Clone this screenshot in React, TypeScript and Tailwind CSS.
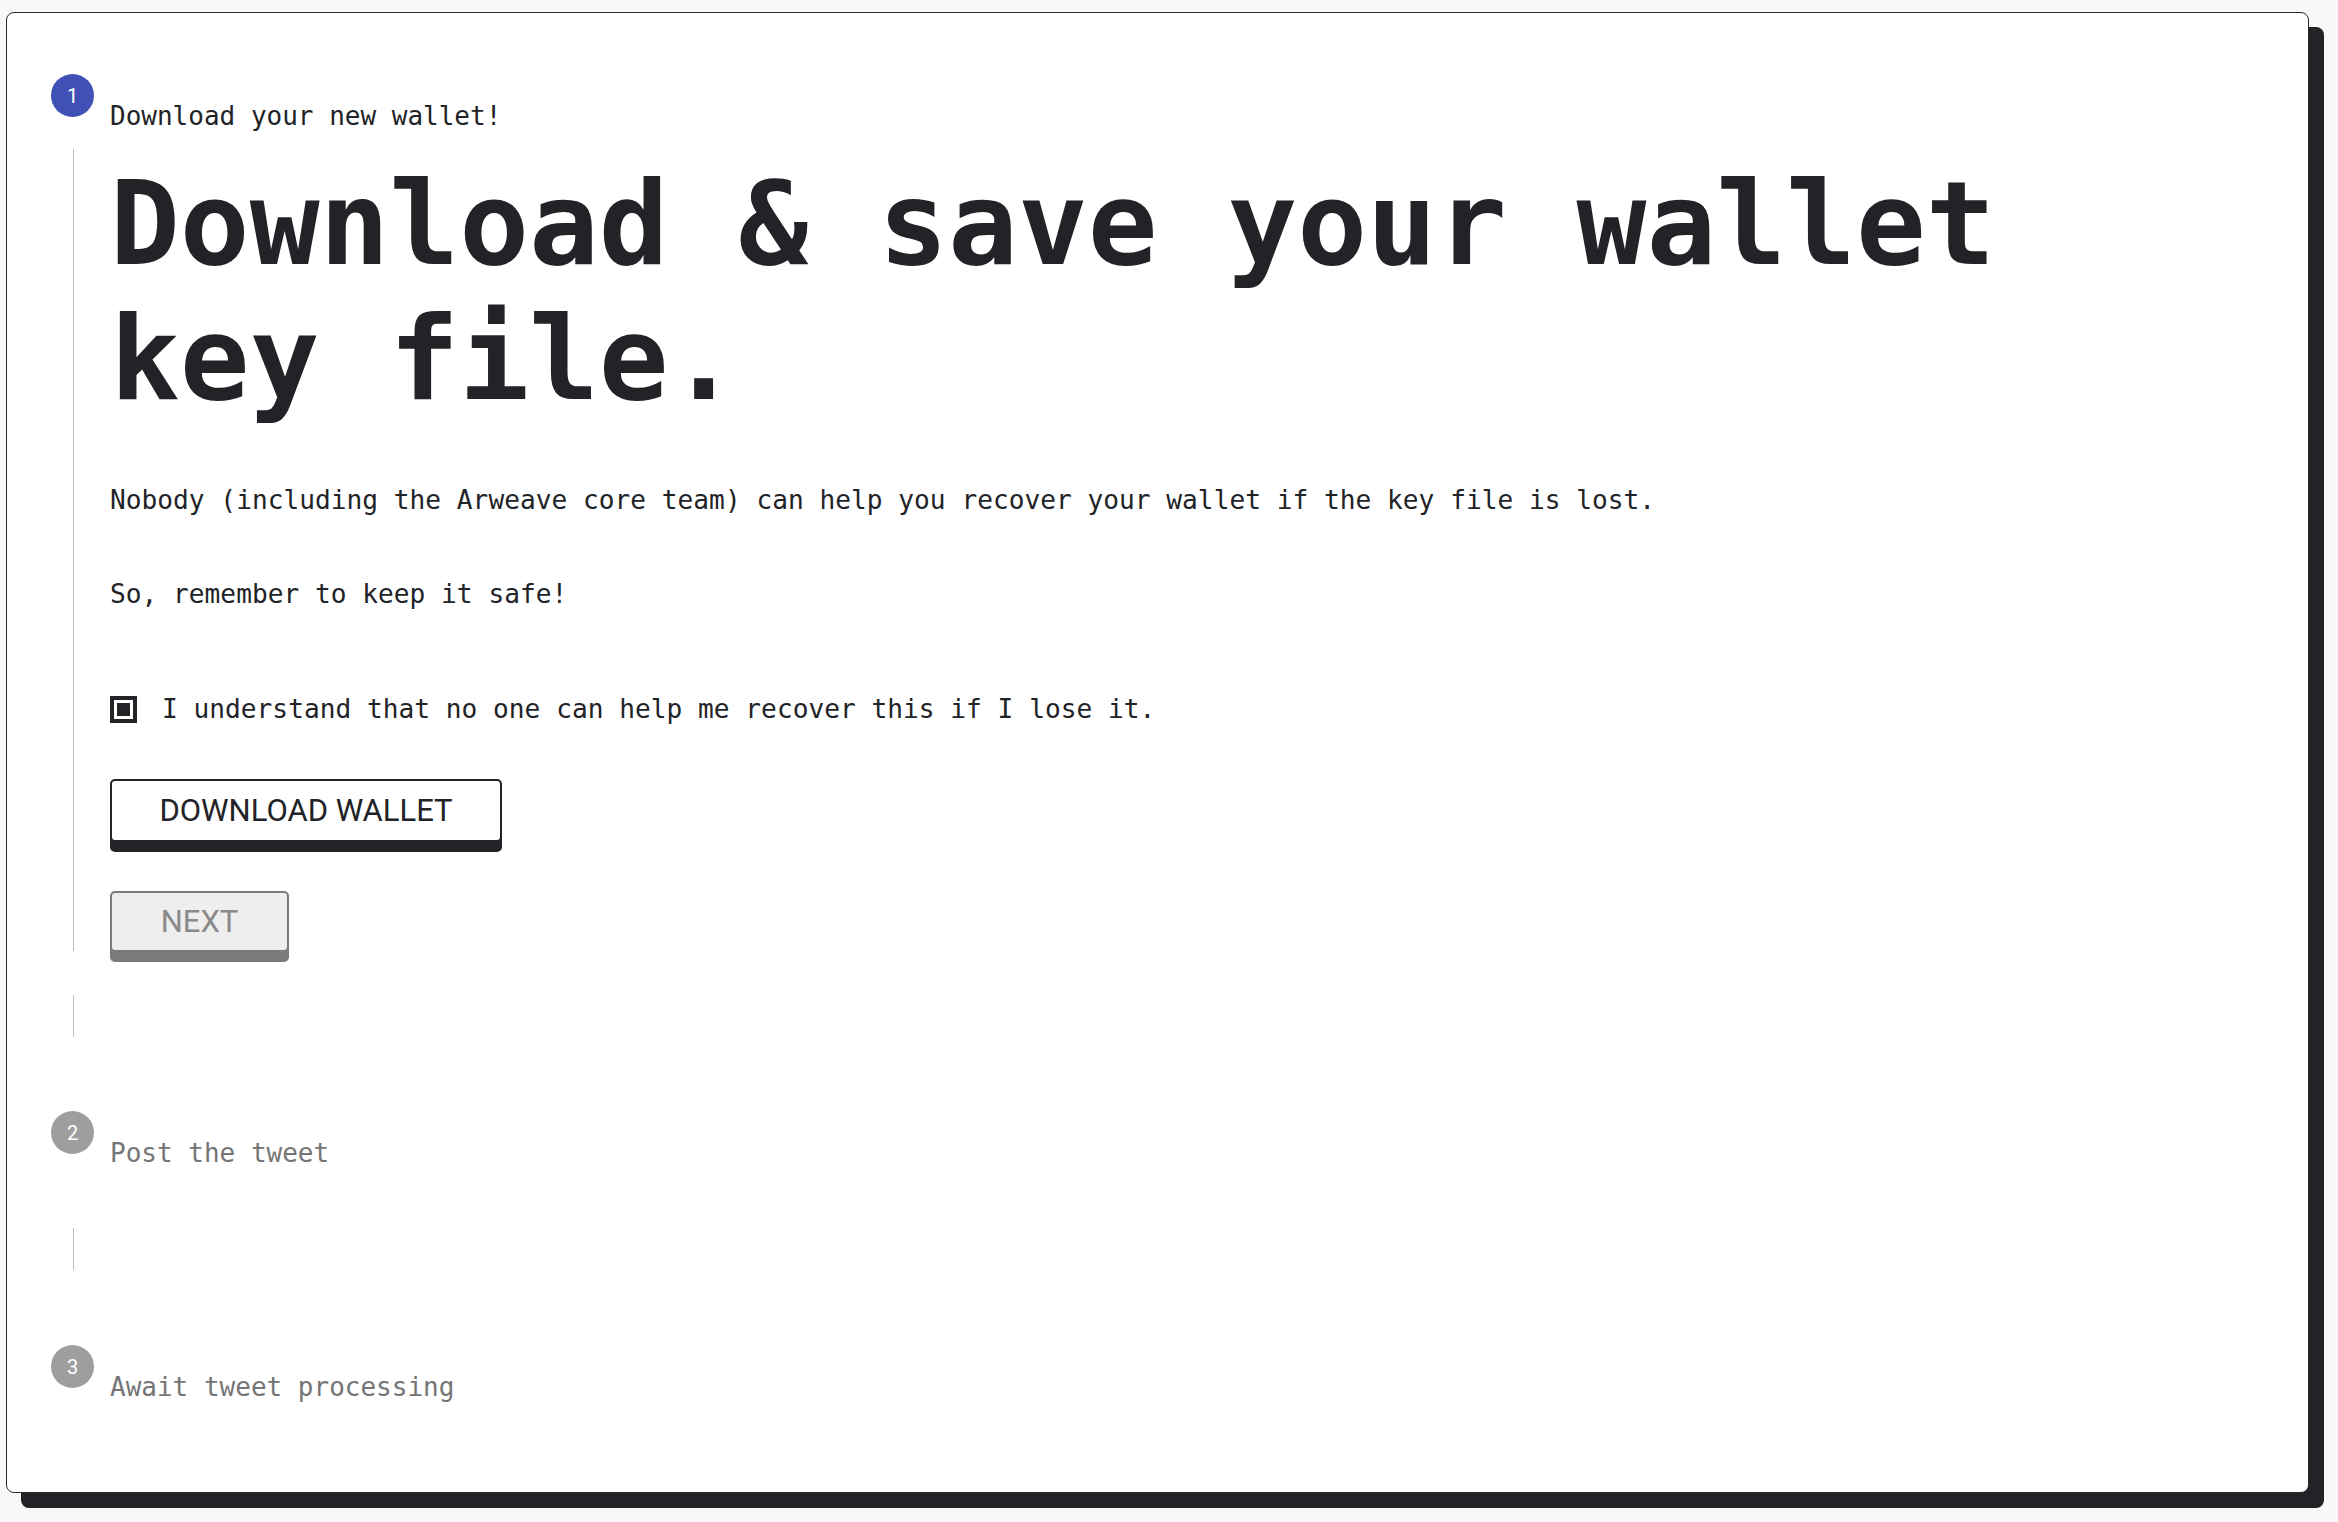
import React from "react";

const mono = "font-['DejaVu_Sans_Mono','Liberation_Mono',monospace]";

function StepCircle({ n, active }: { n: number; active?: boolean }) {
  return (
    <div
      className={`flex h-[43px] w-[43px] shrink-0 items-center justify-center rounded-full font-['Roboto',sans-serif] text-[20px] text-white ${
        active ? "bg-[#3f51b5]" : "bg-[#9e9e9e]"
      }`}
    >
      {n}
    </div>
  );
}

function StepHeader({ n, label, active }: { n: number; label: string; active?: boolean }) {
  return (
    <div className="flex items-start">
      <StepCircle n={n} active={active} />
      <div
        className={`ml-[16px] pt-[27px] text-[26px] leading-[30px] ${mono} ${
          active ? "text-[#222327]" : "text-[#757575]"
        }`}
      >
        {label}
      </div>
    </div>
  );
}

function Connector() {
  return <div className="ml-[22px] h-[42px] w-px bg-[#bdbdbd]" />;
}

export default function App() {
  return (
    <div className="min-h-screen w-full bg-[#f8f8f8] pl-[6px] pt-[12px]">
      <div className="flex h-[1481px] w-[2303px] flex-col rounded-lg border border-[#2a2a2e] bg-white pl-[44px] pt-[61px] shadow-[15px_15px_0_0_#222327]">
        <StepHeader n={1} label="Download your new wallet!" active />

        <div className="mt-[18px] flex h-[802px] items-start">
          <div className="ml-[22px] h-[802px] w-px bg-[#bdbdbd]" />
          <div className={`ml-[36px] flex flex-col pt-[7px] text-[#222327] ${mono}`}>
            <h1 className="text-[116px] font-bold leading-[135px] tracking-normal">
              Download &amp; save your wallet
              <br />
              key file.
            </h1>
            <p className="mt-[59px] text-[26.2px] leading-[30px]">
              Nobody (including the Arweave core team) can help you recover your wallet if the key file is lost.
            </p>
            <p className="mt-[64px] text-[26.2px] leading-[30px]">So, remember to keep it safe!</p>

            <label className="mt-[85px] flex items-center">
              <span className="flex h-[27px] w-[27px] items-center justify-center border-[4px] border-[#222327] bg-white">
                <span className="h-[13px] w-[13px] bg-[#222327]" />
              </span>
              <span className="ml-[25px] text-[26.2px] leading-[30px]">
                I understand that no one can help me recover this if I lose it.
              </span>
            </label>

            <button className="mt-[55px] flex h-[63px] w-[392px] items-center justify-center rounded-[5px] border-2 border-[#222327] bg-white font-['Roboto',sans-serif] text-[31px] leading-none text-[#222327] shadow-[0_10px_0_0_#222327]">
              DOWNLOAD WALLET
            </button>

            <button className="mt-[49px] flex h-[61px] w-[179px] items-center justify-center rounded-[5px] border-2 border-[#7a7a7a] bg-[#eeeeee] font-['Roboto',sans-serif] text-[31px] leading-none text-[#8a8a8a] shadow-[0_10px_0_0_#7a7a7a]">
              NEXT
            </button>
          </div>
        </div>

        <div className="mt-[44px]">
          <Connector />
        </div>

        <div className="mt-[74px]">
          <StepHeader n={2} label="Post the tweet" />
        </div>

        <div className="mt-[60px]">
          <Connector />
        </div>

        <div className="mt-[75px]">
          <StepHeader n={3} label="Await tweet processing" />
        </div>
      </div>
    </div>
  );
}
